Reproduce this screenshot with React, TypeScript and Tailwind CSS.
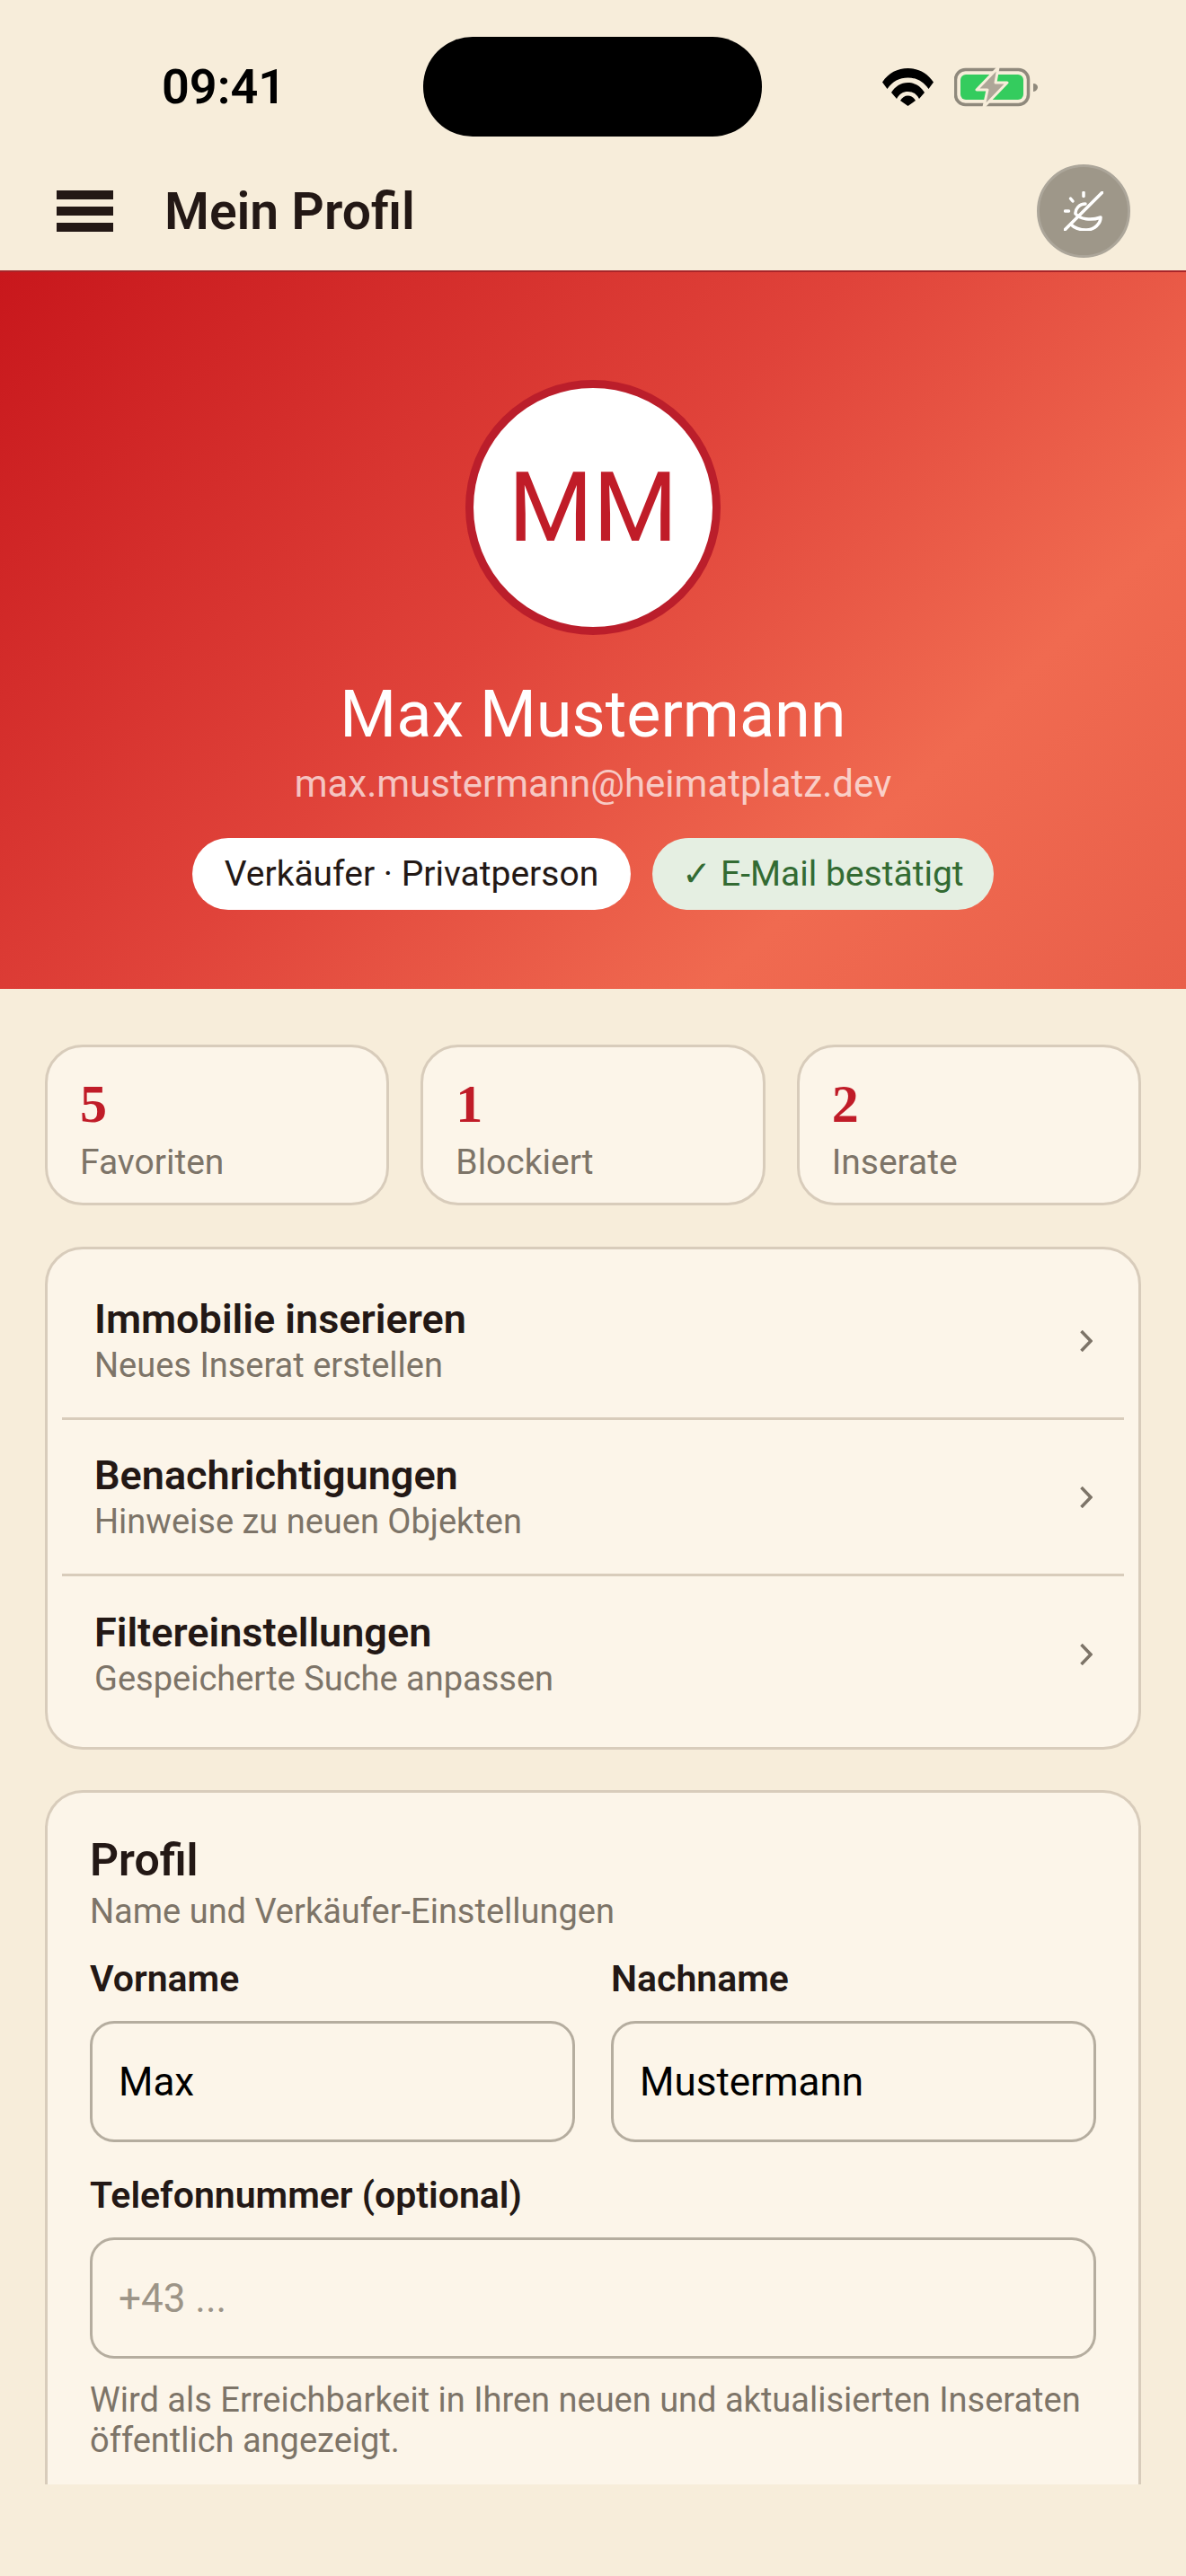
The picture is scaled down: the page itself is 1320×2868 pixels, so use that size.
import React from "react";

const sans = "font-['Roboto','Liberation_Sans',sans-serif]";

function Wifi() {
  return (
    <svg viewBox="0 0 57 42" className="h-[42px] w-[57px]" fill="#000">
      <path d="M0 15.5 C7 5 17 0 28.500 0 C40 0 50 5 57 15.500 L51.500 23 C45.500 14.500 38 10.500 28.500 10.500 C19 10.500 11.500 14.500 5.500 23 Z" />
      <path d="M10 27 C14 20.500 20.500 16 28.500 16 C36.500 16 43 20.500 47 27 L41 34 C38 28.500 34 26 28.500 26 C23 26 19 28.500 16 34 Z" />
      <path d="M20 36 C22 32.500 25 30.500 28.500 30.500 C32 30.500 35 32.500 37 36 L28.500 42 Z" transform="translate(0 0)" />
    </svg>
  );
}

function Battery() {
  return (
    <svg viewBox="0 0 93 44" className="h-[44px] w-[93px]">
      <rect x="1.500" y="2.500" width="81" height="39" rx="11" fill="none" stroke="#8f897c" strokeWidth="3.500" />
      <rect x="7" y="8" width="70" height="28" rx="6" fill="#34cc5e" />
      <path d="M88 18 C91 18 93 20 93 22 C93 24 91 27 88 27 Z" fill="#8f897c" />
      <path d="M49 0 L25 25 H37 L33 44 L59 17 H46 Z" fill="#aea698" stroke="#f7edda" strokeWidth="3" strokeLinejoin="round" />
    </svg>
  );
}

function ThemeIcon() {
  return (
    <svg viewBox="0 0 44 44" className="h-[44px] w-[44px]" fill="none" stroke="#fff" strokeWidth="3.500" strokeLinecap="round" strokeLinejoin="round">
      <path d="M22 1.500 V5.500" />
      <path d="M7.500 8 L10 11" />
      <path d="M1.500 22 H5.500" />
      <path d="M43 1 L1 43" />
      <path d="M24 14 C17 14 12.500 20 13 25 C18 31 30 33 41 29 C41 36 34 43 25 43 C18 43 12 41 8 37" />
    </svg>
  );
}

function Chevron() {
  return (
    <svg viewBox="0 0 14 24" className="h-[24px] w-[14px]" fill="none" stroke="#7d7468" strokeWidth="3.500">
      <path d="M1.500 1 L12 12 L1.500 23" />
    </svg>
  );
}

function Stat({ n, label }: { n: string; label: string }) {
  return (
    <div className="flex h-[179px] flex-col rounded-[42px] border-[3px] border-[#d8ccbb] bg-[#fcf5e9] pl-[36px] pt-[30px]">
      <div className="font-['Liberation_Serif',serif] text-[60px] font-bold leading-[66px] text-[#c01c28]">{n}</div>
      <div className="mt-[5px] text-[39px] leading-[54px] text-[#7d7468]">{label}</div>
    </div>
  );
}

function MenuRow({ title, sub, last }: { title: string; sub: string; last?: boolean }) {
  return (
    <div className={`flex h-[174px] items-center justify-between pl-[36px] pr-[35px] ${last ? "" : "border-b-[3px] border-[#d8ccbb]"}`}>
      <div className="flex flex-col">
        <div className="text-[45px] font-semibold leading-[54px] text-[#231815]">{title}</div>
        <div className="text-[38px] leading-[48px] text-[#7d7468]">{sub}</div>
      </div>
      <Chevron />
    </div>
  );
}

function Field({ label, value, placeholder }: { label: string; value?: string; placeholder?: string }) {
  return (
    <div className="flex flex-col">
      <div className="text-[41px] font-semibold leading-[54px] text-[#231815]">{label}</div>
      <div className="mt-[20px] flex h-[135px] items-center rounded-[27px] border-[3px] border-[#b5ad9f] pl-[29px]">
        <span className={`text-[44px] ${value ? "text-black" : "text-[#9c9487]"}`}>{value ?? placeholder}</span>
      </div>
    </div>
  );
}

export default function App() {
  return (
    <div className={`flex h-[2868px] w-[1320px] flex-col overflow-hidden bg-[#f7edda] ${sans}`}>
      {/* iOS status bar */}
      <div className="flex h-[152px] items-end pl-[180px]">
        <div className="flex h-[111px] items-center">
          <div className="w-[291px] text-[54px] font-semibold leading-none text-black">09:41</div>
          <div className="h-[111px] w-[377px] rounded-[55px] bg-black" />
          <div className="ml-[134px]"><Wifi /></div>
          <div className="ml-[23px]"><Battery /></div>
        </div>
      </div>

      {/* App bar */}
      <div className="flex items-center pb-[14px] pl-[63px] pr-[62px] pt-[31px]">
        <div className="flex h-[46px] w-[63px] flex-col justify-between">
          <div className="h-[10px] bg-[#231815]" />
          <div className="h-[10px] bg-[#231815]" />
          <div className="h-[10px] bg-[#231815]" />
        </div>
        <div className="ml-[57px] flex-1 text-[57px] font-semibold leading-none text-[#231815]">Mein Profil</div>
        <div className="flex h-[104px] w-[104px] items-center justify-center rounded-full border-[3px] border-[#aca69a] bg-[#9e9789]">
          <ThemeIcon />
        </div>
      </div>

      {/* Profile hero */}
      <div className="flex h-[800px] flex-col items-center border-t-[2px] border-[#a8262a] bg-[linear-gradient(135deg,#c8171c_0%,#e0433a_45%,#f06a50_75%,#e95f4a_100%)] pt-[120px]">
        <div className="flex h-[284px] w-[284px] items-center justify-center rounded-full border-[9px] border-[#bb1e2b] bg-white">
          <span className="text-[108px] leading-none text-[#c01c28]">MM</span>
        </div>
        <div className="mt-[44px] text-[72px] leading-[90px] text-white">Max Mustermann</div>
        <div className="mt-[2px] text-[42px] leading-[60px] text-white/70">max.mustermann@heimatplatz.dev</div>
        <div className="mt-[30px] flex gap-[24px]">
          <div className="flex h-[80px] w-[488px] items-center justify-center rounded-full bg-white text-[39px] text-[#231815]">Verkäufer · Privatperson</div>
          <div className="flex h-[80px] w-[380px] items-center justify-center rounded-full bg-[#e5efe2] text-[39px] text-[#336b33]">✓ E-Mail bestätigt</div>
        </div>
      </div>

      <div className="flex flex-col px-[50px] pt-[62px]">
        <div className="grid grid-cols-3 gap-[35px]">
          <Stat n="5" label="Favoriten" />
          <Stat n="1" label="Blockiert" />
          <Stat n="2" label="Inserate" />
        </div>

        <div className="mt-[46px] flex h-[560px] flex-col rounded-[42px] border-[3px] border-[#d8ccbb] bg-[#fcf5e9] px-[16px] py-[16px]">
          <MenuRow title="Immobilie inserieren" sub="Neues Inserat erstellen" />
          <MenuRow title="Benachrichtigungen" sub="Hinweise zu neuen Objekten" />
          <MenuRow title="Filtereinstellungen" sub="Gespeicherte Suche anpassen" last />
        </div>

        <div className="mt-[45px] h-[773px] rounded-t-[42px] border-x-[3px] border-t-[3px] border-[#d8ccbb] bg-[#fcf5e9] px-[47px] pt-[42px]">
          <div className="text-[50px] font-semibold leading-[66px] text-[#231815]">Profil</div>
          <div className="text-[38px] leading-[48px] text-[#7d7468]">Name und Verkäufer-Einstellungen</div>
          <div className="mt-[24px] grid grid-cols-2 gap-[40px]">
            <Field label="Vorname" value="Max" />
            <Field label="Nachname" value="Mustermann" />
          </div>
          <div className="mt-[32px]">
            <Field label="Telefonnummer (optional)" placeholder="+43 ..." />
          </div>
          <div className="mt-[24px] text-[38px] leading-[45px] text-[#7d7468]">
            Wird als Erreichbarkeit in Ihren neuen und aktualisierten Inseraten öffentlich angezeigt.
          </div>
        </div>
      </div>
    </div>
  );
}
